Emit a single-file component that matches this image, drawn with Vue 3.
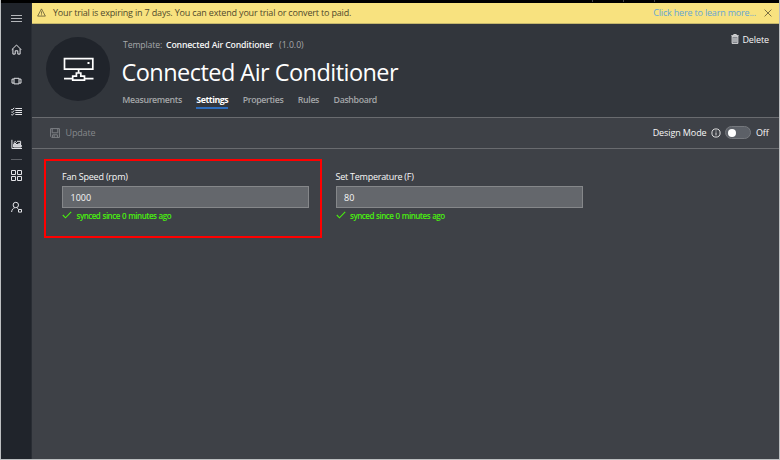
<script setup>
import { ref } from 'vue'

const tabs = ['Measurements', 'Settings', 'Properties', 'Rules', 'Dashboard']
const active = ref('Settings')
const fields = ref([
  { label: 'Fan Speed (rpm)', value: '1000', marked: true, cls: 'fan' },
  { label: 'Set Temperature (F)', value: '80', marked: false, cls: 'temp' },
])
</script>

<template>
  <div class="frame">
    <div class="topstrip"><i></i><i></i><i></i></div>
    <div class="shell">
      <nav class="side">
        <svg class="dim" viewBox="0 0 11 12"><path d="M0 3.5h11M0 6.5h11M0 9.5h11" /></svg>
        <svg viewBox="0 0 11 12"><path d="M.8 6.7 5.5 2l4.7 4.7M1.9 5.8v5.3h2.3V7.8h2.6v3.3h2.3V5.8" /></svg>
        <svg viewBox="0 0 11 12"><path d="M3 3.3h5v5.6H3zM2.8 4.1H1v4h1.8M8.2 4.1H10v4H8.2" /></svg>
        <svg viewBox="0 0 11 12"><path d="M4.3 2.5H11M4.3 4.5H11M4.3 6.5H11M4.3 8.5H11M.2 3l1 1 2-2.2M.2 5.6l1 1 2-2.2M.2 8.3l1 1 2-2.2" /></svg>
        <svg viewBox="0 0 11 12"><path d="M.9 1.8v8.7H11" /><path class="area" d="M2.6 9V6.2L4 5l2 2 2.2-1.5L10.2 7v2z" /><path d="M2.5 5 4.2 3.4l1.6 1.4M6 3.3h3.6v2.8" /></svg>
        <span class="rule"></span>
        <svg viewBox="0 0 11 12"><path d="M.5 1.5h4v4h-4zM6.5 1.5h4v4h-4zM.5 7.5h4v4h-4zM6.5 7.5h4v4h-4z" /></svg>
        <svg viewBox="0 0 11 12"><circle cx="4.8" cy="4" r="2.7" /><path d="M.6 11c.3-2.4 1.4-3.8 3.2-4.3M5.8 6.6 7.4 8M7.5 8.5h3v2.6h-3z" /></svg>
      </nav>
      <main class="main">
        <div class="banner">
          <svg class="warn" viewBox="0 0 10 10"><path d="M5 1 9.3 9H.7zM5 3.8v2.6M5 7.1v1" /></svg>
          <span class="trial">Your trial is expiring in 7 days. You can extend your trial or convert to paid.</span>
          <a class="more">Click here to learn more...</a>
          <svg class="close" viewBox="0 0 8 8"><path d="m.6.6 6.8 6.8M7.4.6.6 7.4" /></svg>
        </div>
        <header class="head">
          <div class="avatar">
            <svg viewBox="0 0 31 25">
              <path d="M1.5 1.6h28.3v10.6H1.5zM15.6 12v4M13.4 16h4.4v3.2h3.7v4H9.7v-4h3.7zM1 21.6h8.7M21.5 21.6h9" />
              <path class="dot" d="M24.5 5h2v2h-2z" />
            </svg>
          </div>
          <div class="titles">
            <div class="template"><span class="tl">Template:</span><span class="tn">Connected Air Conditioner</span><span class="tv">(1.0.0)</span></div>
            <h1><span>Connected Air Conditioner</span></h1>
            <div class="tabs">
              <a v-for="t in tabs" :key="t" :class="['tab', t.toLowerCase(), { on: t === active }]" @click="active = t">{{ t }}</a>
            </div>
          </div>
          <div class="delete">
            <svg viewBox="0 0 8 10"><path class="bin" d="M1.1 2.3h5.8v7.1H1.1z" /><path d="M.2 1.7h7.6M2.7 1.5V.5h2.6v1M3 3.6v4.5M5 3.6v4.5" /></svg>
            <span>Delete</span>
          </div>
        </header>
        <div class="toolbar">
          <svg class="save" viewBox="0 0 10 10"><path d="M.6.6h8.8v8.8H1.7L.6 8.3zM2.2.8v4h5.6v-4M2.6 9.2V6.8h4.8v2.4M4.2 7.3v1.6" /></svg>
          <span class="update">Update</span>
          <span class="mode">Design Mode</span>
          <svg class="info" viewBox="0 0 10 10"><circle cx="5" cy="5" r="4.1" /><path d="M5 4.4v3M5 2.5v1" /></svg>
          <span class="switch"><i></i></span>
          <span class="off">Off</span>
        </div>
        <section class="fields">
          <div v-for="f in fields" :key="f.label" :class="['field', f.cls, { marked: f.marked }]">
            <label><span>{{ f.label }}</span></label>
            <div class="box">{{ f.value }}</div>
            <div class="sync">
              <svg viewBox="0 0 10 8"><path d="m.8 4 2.7 2.8L9.2.8" /></svg>
              <span>synced since 0 minutes ago</span>
            </div>
          </div>
        </section>
      </main>
    </div>
  </div>
</template>

<style>
body { margin: 0; background: #bdbfc1; overflow: hidden; }
</style>

<style scoped>
* { box-sizing: border-box; }
.frame { width: 780px; height: 460px; padding: 0 1px 1px; display: flex; flex-direction: column; background: #bdbfc1; font-family: "Open Sans", "Noto Sans", sans-serif; font-size: 9px; color: #f7f7f7; white-space: nowrap; }
svg { display: block; fill: none; stroke: currentColor; stroke-width: 1; flex: none; }
.topstrip { height: 3px; background: #000; display: flex; justify-content: flex-end; gap: 30px; padding-right: 124px; flex: none; }
.topstrip i { width: 1px; height: 2px; background: #444; }
.shell { flex: 1; display: flex; min-height: 0; }
.side { width: 31px; background: #20242b; display: flex; flex-direction: column; align-items: center; padding-top: 9px; border-right: 1px solid #292d34; color: #e2e3e7; }
.side svg { width: 11px; height: 12px; margin: 0 0 19px; }
.side .dim { color: #b4b6ba; }
.side svg:nth-child(2), .side svg:nth-child(3) { margin-bottom: 19.5px; }
.side svg:nth-child(4) { margin-bottom: 20px; }
.side svg:nth-child(5) { margin-bottom: 9px; }
.area { fill: #c9cad0; }
.rule { width: 11px; height: 1px; background: #5d6066; margin-bottom: 9px; }
.side .rule + svg { margin-bottom: 20px; }
.main { flex: 1; display: flex; flex-direction: column; background: #3e4147; min-width: 0; }
.banner { height: 21px; background: #f8e27f; border-bottom: 1px solid #c5b76c; display: flex; align-items: center; color: #50492c; padding: 0 7px 1px 5px; flex: none; }
.warn { width: 9px; height: 9px; stroke-width: .8; margin-right: 7px; }
.trial { letter-spacing: -.17px; }
.more { margin-left: auto; color: #65a5d4; letter-spacing: -.18px; }
.close { width: 8px; height: 8px; margin-left: 8px; stroke-width: .9; color: #6e643c; }
.head { height: 94px; background: #32363c; border-bottom: 1px solid #696b6f; display: flex; padding: 0 10px 0 14px; flex: none; }
.avatar { width: 64px; height: 64px; border-radius: 50%; background: #20242b; margin-top: 13px; display: flex; align-items: center; justify-content: center; }
.avatar svg { width: 31px; height: 25px; stroke: #fff; stroke-width: 1.7; }
.avatar .dot { fill: #fff; stroke: none; }
.titles { margin-left: 13px; }
.template { display: flex; height: 14px; line-height: 14px; margin-top: 14px; font-size: 8.7px; color: #a6a8ab; }
.tl { letter-spacing: -.14px; }
.tn { color: #f5f5f5; font-weight: 600; margin-left: 4px; letter-spacing: -.16px; }
.tv { margin-left: 6px; }
h1 { margin: 4px 0 0 -1.5px; font-size: 23.5px; font-weight: 400; line-height: 32px; height: 32px; color: #fff; letter-spacing: -.54px; }
.tabs { display: flex; gap: 14.5px; height: 17px; margin: 5px 0 0 -.7px; }
.tab { font-size: 8.8px; font-weight: 600; line-height: 14px; color: #a4a6a9; height: 16px; letter-spacing: -.36px; }
.on { color: #fff; border-bottom: 2px solid #2d6dbd; font-weight: 700; letter-spacing: -.45px; }
.delete { display: flex; align-items: center; height: 12px; margin: 9px 0 0 auto; }
.delete svg { width: 8px; height: 10px; margin-right: 3px; stroke-width: .8; }
.delete span { letter-spacing: -.1px; }
.bin { fill: #73777e; }
.toolbar { height: 31px; display: flex; align-items: center; border-bottom: 1px solid #696b6f; padding: 0 10.5px 1px 18px; color: #85878b; flex: none; }
.save { width: 10px; height: 10px; stroke-width: .9; margin-right: 5.5px; }
.update { letter-spacing: -.15px; }
.mode { margin-left: auto; color: #f7f7f7; letter-spacing: -.1px; }
.info { width: 10px; height: 10px; margin: 0 4px 0 4.5px; color: #eee; stroke-width: .9; }
.switch { width: 26px; height: 13px; border-radius: 7px; background: #5c6067; border: 1px solid #75787d; display: flex; align-items: center; padding-left: 2px; }
.switch i { width: 8px; height: 8px; border-radius: 50%; background: #fff; }
.off { margin-left: 5px; color: #f7f7f7; letter-spacing: -.2px; }
.fields { display: flex; padding: 10px 0 0 12px; align-items: flex-start; }
.field { width: 278px; height: 79px; padding: 10px 11px 0 16px; border: 2px solid transparent; }
.marked { border-color: #f00; }
.temp { margin-left: -4.4px; }
label { display: block; height: 12px; line-height: 12px; margin-bottom: 3px; letter-spacing: -.2px; }
.temp label { letter-spacing: -.26px; }
.box { height: 22px; width: 247px; background: #64676c; border: 1px solid #85878a; padding-left: 7.5px; line-height: 21px; }
.sync { display: flex; align-items: center; height: 12px; margin-top: 1px; color: #49f00e; font-size: 8px; font-weight: 600; letter-spacing: -.5px; word-spacing: .6px; }
.sync svg { width: 10px; height: 8px; margin-right: 4.5px; stroke-width: 1.1; }
</style>
